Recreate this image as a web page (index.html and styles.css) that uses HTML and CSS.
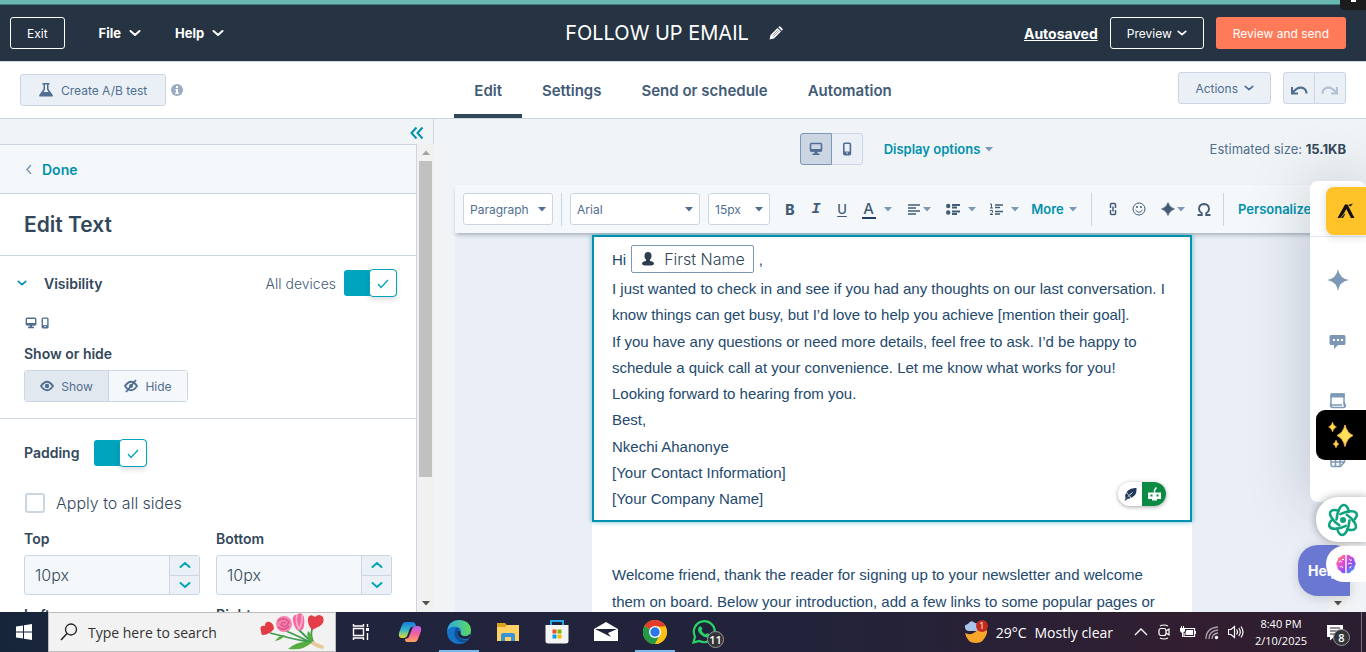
FILE: index.html
```html
<!DOCTYPE html>
<html lang="en">
<head>
<meta charset="utf-8">
<meta name="viewport" content="width=device-width, initial-scale=1">
<title>Follow up email</title>
<link rel="stylesheet" href="styles.css">
</head>
<body>
<svg class="defs" width="0" height="0" aria-hidden="true">
  <symbol id="chev" viewBox="0 0 12 12"><path d="M1.500 4l4.500 4 4.500-4" fill="none" stroke="currentColor" stroke-width="2" stroke-linecap="round" stroke-linejoin="round"/></symbol>
  <symbol id="caret" viewBox="0 0 8 5"><path d="M0 0h8L4 4.500z" fill="currentColor"/></symbol>
  <symbol id="desktop" viewBox="0 0 14 14"><path d="M2.500 1.500h9q1 0 1 1V8q0 1-1 1h-9q-1 0-1-1V2.500q0-1 1-1z" fill="none" stroke="currentColor" stroke-width="1.600"/><path d="M1 7h12v2.500H1zM5.500 9h3v2.500h2V13h-7v-1.500h2z" fill="currentColor"/></symbol>
  <symbol id="mobile" viewBox="0 0 14 14"><rect x="3.800" y="1.300" width="6.600" height="11.400" rx="1" fill="none" stroke="currentColor" stroke-width="1.600"/><path d="M4 9.500h6v3H4z" fill="currentColor"/><path d="M6.300 10.600h1.500v1H6.300z" fill="#fff"/></symbol>
  <symbol id="eye" viewBox="0 0 14 12"><path d="M1 6q6-8.500 12 0-6 8.500-12 0z" fill="none" stroke="currentColor" stroke-width="1.800"/><circle cx="7" cy="6" r="2.200" fill="currentColor"/></symbol>
  <symbol id="star4" viewBox="0 0 22 22"><path d="M11 0Q12.500 9.500 22 11 12.500 12.500 11 22 9.500 12.500 0 11 9.500 9.500 11 0z" fill="currentColor"/></symbol>
  <symbol id="star4b" viewBox="0 0 14 14"><path d="M7 0.500Q8.500 5.500 13.500 7 8.500 8.500 7 13.500 5.500 8.500 .5 7 5.500 5.500 7 .5z" fill="currentColor" stroke="currentColor" stroke-width=".6"/></symbol>
  <symbol id="tick" viewBox="0 0 14 12"><path d="M2 7l3 3.500 7-7.500" fill="none" stroke="currentColor" stroke-width="1.300"/></symbol>
</svg>

<div class="app">
  <header class="topbar">
    <div class="topbar-left">
      <button class="btn btn-ghost">Exit</button>
      <button class="menu">File <svg class="ic12"><use href="#chev"/></svg></button>
      <button class="menu">Help <svg class="ic12"><use href="#chev"/></svg></button>
    </div>
    <div class="title-wrap">
      <h1 class="title">FOLLOW UP EMAIL</h1>
      <button class="plain" aria-label="Rename"><svg class="ic14" viewBox="0 0 14 14"><path d="M.5 13.500l1-4.500L8.500 2l3.500 3.500L5 12.500zM9.300 1.200l.7-.7q.6-.5 1.200 0l2.300 2.300q.5.600 0 1.200l-.7.700z" fill="#fff"/><path d="M3.500 9.500l5.500-5.500M4.700 10.500l5.500-5.500" stroke="#253342" stroke-width=".5"/></svg></button>
    </div>
    <div class="topbar-right">
      <a class="autosaved" href="#">Autosaved</a>
      <button class="btn btn-ghost">Preview <svg class="ic10"><use href="#chev"/></svg></button>
      <button class="btn btn-primary">Review and send</button>
    </div>
    <div class="corner-tab"><span class="corner-dot"></span></div>
  </header>

  <nav class="subnav">
    <div class="subnav-left">
      <button class="btn btn-soft btn-test"><svg class="ic14" viewBox="0 0 14 14"><path d="M3.500 0h7v1.500h-1V6l4.200 6q.5 1.500-1 1.500H1.300q-1.500 0-1-1.500L4.500 6V1.500h-1z" fill="#506e91"/><path d="M6 1.500h2v5l1.500 2.500h-5L6 6.500z" fill="#eaf0f6"/></svg>Create A/B test</button>
      <svg class="ic12" viewBox="0 0 12 12"><circle cx="6" cy="6" r="6" fill="#99acc2"/><path d="M5 2h2v2H5zM4.500 5H7v3.500h.7V10H4.300V8.500H5V6.300h-.5z" fill="#fff"/></svg>
    </div>
    <div class="tabs">
      <a class="tab tab-active" href="#">Edit</a>
      <a class="tab" href="#">Settings</a>
      <a class="tab" href="#">Send or schedule</a>
      <a class="tab" href="#">Automation</a>
    </div>
    <div class="subnav-right">
      <button class="btn btn-soft btn-actions">Actions <svg class="ic10"><use href="#chev"/></svg></button>
      <div class="pair">
        <button class="pair-btn" aria-label="Undo"><svg class="ic18" viewBox="0 0 18 18"><path d="M2 8v6.500h6M2.500 14Q8 6.500 14 9.500q2.500 1.500 2.500 5" fill="none" stroke="#506e91" stroke-width="2"/></svg></button>
        <button class="pair-btn" aria-label="Redo"><svg class="ic18" viewBox="0 0 18 18"><path d="M16 8v6.500h-6M15.500 14Q10 6.500 4 9.500 1.500 11 1.500 14.500" fill="none" stroke="#b0c1d4" stroke-width="2"/></svg></button>
      </div>
    </div>
  </nav>

  <main class="main">
    <aside class="sidebar">
      <div class="collapse"><button class="plain teal" aria-label="Collapse"><svg class="ic14" viewBox="0 0 14 14"><path d="M6.500 1.500L1.500 7l5 5.500M12.500 1.500l-5 5.500 5 5.500" fill="none" stroke="currentColor" stroke-width="2"/></svg></button></div>
      <div class="side-body">
        <div class="panel">
          <div class="done-row"><svg class="ic10" viewBox="0 0 10 10"><path d="M7 1L3 5.500 7 10" fill="none" stroke="#7c98b6" stroke-width="1.500"/></svg><a class="done" href="#">Done</a></div>
          <h2 class="panel-title">Edit Text</h2>
          <section class="visibility">
            <div class="vis-row">
              <button class="expander"><svg class="ic10 teal"><use href="#chev"/></svg>Visibility</button>
              <label class="all" for="all-dev">All devices</label>
              <span class="toggle"><input class="toggle-input" id="all-dev" type="checkbox" checked><span class="knob"><svg class="ic14"><use href="#tick"/></svg></span></span>
            </div>
            <div class="devices"><svg class="ic12"><use href="#desktop"/></svg><svg class="ic12"><use href="#mobile"/></svg></div>
            <div class="label">Show or hide</div>
            <div class="seg">
              <button class="seg-btn seg-on"><svg class="ic14"><use href="#eye"/></svg>Show</button>
              <button class="seg-btn"><svg class="ic14" viewBox="0 0 14 12"><path d="M1 6q6-8.500 12 0-6 8.500-12 0zM12 0L2 12" fill="none" stroke="currentColor" stroke-width="1.800"/><circle cx="7" cy="6" r="2" fill="currentColor"/></svg>Hide</button>
            </div>
          </section>
          <section class="padding">
            <div class="pad-row"><label class="label" for="pad">Padding</label>
              <span class="toggle"><input class="toggle-input" id="pad" type="checkbox" checked><span class="knob"><svg class="ic14"><use href="#tick"/></svg></span></span></div>
            <label class="check"><input class="check-box" type="checkbox">Apply to all sides</label>
            <div class="sides">
              <div class="side"><label class="label" for="top">Top</label>
                <div class="stepper"><input class="num" id="top" value="10px"><div class="steps"><button class="step" aria-label="Increase"><svg class="ic12 up"><use href="#chev"/></svg></button><button class="step" aria-label="Decrease"><svg class="ic12"><use href="#chev"/></svg></button></div></div></div>
              <div class="side"><label class="label" for="bottom">Bottom</label>
                <div class="stepper"><input class="num" id="bottom" value="10px"><div class="steps"><button class="step" aria-label="Increase"><svg class="ic12 up"><use href="#chev"/></svg></button><button class="step" aria-label="Decrease"><svg class="ic12"><use href="#chev"/></svg></button></div></div></div>
              <div class="label">Left</div>
              <div class="label">Right</div>
            </div>
          </section>
        </div>
        <div class="scrollbar"><svg class="arrow up" viewBox="0 0 8 5"><path d="M0 0h8L4 4.500z" fill="#a3a3a3"/></svg><div class="thumb"></div><svg class="arrow" viewBox="0 0 8 5"><path d="M0 0h8L4 4.500z" fill="#505050"/></svg></div>
      </div>
    </aside>

    <section class="work">
      <div class="viewbar">
        <div class="view-mid">
          <div class="pair">
            <button class="pair-btn pair-on" aria-label="Desktop"><svg class="ic14"><use href="#desktop"/></svg></button>
            <button class="pair-btn" aria-label="Mobile"><svg class="ic14"><use href="#mobile"/></svg></button>
          </div>
          <button class="link-btn">Display options <svg class="caret"><use href="#caret"/></svg></button>
        </div>
        <div class="size">Estimated size: <b class="size-val">15.1KB</b></div>
      </div>

      <div class="toolbar">
        <span class="sel sel-para"><select class="select" aria-label="Style"><option>Paragraph</option></select><svg class="caret sel-caret"><use href="#caret"/></svg></span>
        <span class="vr"></span>
        <span class="sel sel-font"><select class="select" aria-label="Font"><option>Arial</option></select><svg class="caret sel-caret"><use href="#caret"/></svg></span>
        <span class="sel sel-size"><select class="select" aria-label="Size"><option>15px</option></select><svg class="caret sel-caret"><use href="#caret"/></svg></span>
        <div class="tools">
          <button class="tool tool-b">B</button>
          <button class="tool tool-i">I</button>
          <button class="tool tool-u">U</button>
          <button class="tool tool-wide" aria-label="Text color"><span class="color-a">A</span><svg class="caret"><use href="#caret"/></svg></button>
          <button class="tool tool-wide tight" aria-label="Align"><svg class="ic14" viewBox="0 0 14 14"><path d="M1 3h12M1 6h8M1 9h12M1 12h8" stroke="currentColor" stroke-width="1.600"/></svg><svg class="caret"><use href="#caret"/></svg></button>
          <button class="tool tool-wide" aria-label="Bullets"><svg class="ic14" viewBox="0 0 14 14"><circle cx="2.200" cy="4" r="2.200" fill="currentColor"/><circle cx="2.200" cy="10.500" r="2.200" fill="currentColor"/><path d="M6 3h8M6 5.500h5M6 9.500h8M6 12h5" stroke="currentColor" stroke-width="1.800"/></svg><svg class="caret"><use href="#caret"/></svg></button>
          <button class="tool tool-wide" aria-label="Numbering"><svg class="ic14" viewBox="0 0 14 14"><path d="M1 2h1.500v4M1 6h3M1 8.500h2.500v2L1 12.500h3" fill="none" stroke="currentColor"/><path d="M6 3h8M6 5.500h5M6 9.500h8M6 12h5" stroke="currentColor" stroke-width="1.600"/></svg><svg class="caret"><use href="#caret"/></svg></button>
          <button class="link-btn more">More <svg class="caret"><use href="#caret"/></svg></button>
        </div>
        <span class="vr"></span>
        <div class="tools">
          <button class="tool" aria-label="Link"><svg class="ic14" viewBox="0 0 14 14"><path d="M4.500 6V2.500q0-1 1-1h3q1 0 1 1V6M4.500 8v3.500q0 1 1 1h3q1 0 1-1V8M7 4.500v5" fill="none" stroke="currentColor" stroke-width="1.500"/></svg></button>
          <button class="tool" aria-label="Emoji"><svg class="ic14" viewBox="0 0 14 14"><circle cx="7" cy="7" r="6" fill="none" stroke="currentColor"/><path d="M3.500 8q3.500 4.500 7 0" fill="none" stroke="currentColor"/><circle cx="5" cy="5" r="1" fill="currentColor"/><circle cx="9" cy="5" r="1" fill="currentColor"/></svg></button>
          <button class="tool tool-wide tight" aria-label="Assistant"><svg class="ic14"><use href="#star4b"/></svg><svg class="caret"><use href="#caret"/></svg></button>
          <button class="tool tool-omega" aria-label="Special character"><svg class="ic14" viewBox="0 0 14 14"><path d="M.5 13h4.300V11.200Q2 9.500 2 6.800 2.300 2.300 7 2q4.700.3 5 4.800 0 2.700-2.800 4.400V13h4.300" fill="none" stroke="currentColor" stroke-width="1.800"/></svg></button>
        </div>
        <span class="vr"></span>
        <button class="link-btn personalize">Personalize</button>
      </div>

      <div class="canvas-row">
        <div class="canvas">
          <article class="email">
            <div class="block block-active">
              <p class="hi">Hi <span class="token"><svg class="person" viewBox="0 0 12 14"><ellipse cx="6" cy="4" rx="3.500" ry="4" fill="#2d3e50"/><path d="M4 7h4v2q4 .3 4 3-.5 1.500-6 1.500T0 12q0-2.700 4-3z" fill="#2d3e50"/></svg>First Name</span> ,</p>
              <p class="para">I just wanted to check in and see if you had any thoughts on our last conversation. I know things can get busy, but I’d love to help you achieve [mention their goal].</p>
              <p class="para">If you have any questions or need more details, feel free to ask. I’d be happy to schedule a quick call at your convenience. Let me know what works for you!</p>
              <p class="para">Looking forward to hearing from you.</p>
              <p class="para">Best,</p>
              <p class="para">Nkechi Ahanonye</p>
              <p class="para">[Your Contact Information]</p>
              <p class="para">[Your Company Name]</p>
              <div class="writer">
                <svg class="writer-half" viewBox="0 0 24 24"><path d="M8 17.500Q5.500 13 10 8.500q3-3 8.500-2.500Q19 11 16 14q-3 3-8 3.500z" fill="#24385b"/><path d="M6.500 19q3-5 8-8.500M8 10.500l2.500 2M13 16l-1.500-2" stroke="#fff" stroke-width=".9" fill="none"/><path d="M7 18.500l3-4" stroke="#24385b" stroke-width="1.200"/></svg>
                <svg class="writer-half writer-bot" viewBox="0 0 24 24"><path d="M6 10.500h13V17h-4v1.500h-5V17H6z" fill="#fff"/><path d="M12.500 10.500V8l2-2.500" stroke="#fff" stroke-width="1.500" fill="none"/><path d="M8.500 12.500h2v2h-2zM14.500 12.500h2v2h-2z" fill="#0a8a43"/></svg>
              </div>
            </div>
            <div class="block">
              <p class="para">Welcome friend, thank the reader for signing up to your newsletter and welcome them on board. Below your introduction, add a few links to some popular pages or</p>
            </div>
          </article>
        </div>
        <div class="scrollbar canvas-bar"><svg class="arrow" viewBox="0 0 8 5"><path d="M0 0h8L4 4.500z" fill="#505050"/></svg></div>
      </div>
    </section>

    <div class="rail">
      <div class="rail-head"><div class="rail-logo"><svg class="ic18" viewBox="0 0 18 18"><path d="M.5 16L8 2.500h2.500L17.500 16H14L9.300 7 6.500 12.500l2-1L6 16z" fill="#111"/><path d="M11 3l2.500 1.500L16 1.500z" fill="#111"/><path d="M3.500 16l6-7" stroke="#ffc229" stroke-width=".8" fill="none"/></svg></div></div>
      <svg class="rail-ic rail-star"><use href="#star4"/></svg>
      <svg class="rail-ic" viewBox="0 0 18 18"><path d="M2 2h13q1.500 0 1.500 1.500v7Q16.500 12 15 12H9l-4 4v-4H2Q.5 12 .5 10.500v-7Q.5 2 2 2z" fill="#7c98b6"/><path d="M4 6h2v2H4zM8 6h2v2H8zM12 6h2v2h-2z" fill="#fff"/></svg>
      <svg class="rail-ic" viewBox="0 0 18 18"><path d="M2 1h13v8l1.500 4q-.5 1.500-2 1.500H4Q1.500 14.500 1.500 12H13M2 1.500v8L1.500 12M15 7v4q0 1.500 1 2" fill="none" stroke="#7c98b6" stroke-width="1.500"/><path d="M1.500 .5h14v4h-14z" fill="#7c98b6"/></svg>
      <svg class="rail-ic" viewBox="0 0 18 18"><path d="M2 1h13.500v8l-4 4.500H4q-2 0-2-2z" fill="none" stroke="#7c98b6" stroke-width="1.500"/><path d="M2 5.500h13M2 9h13M6.500 2v11M11 2v11" stroke="#7c98b6" stroke-width="1.500"/></svg>
    </div>
    <div class="spark-tab"><svg class="spark" viewBox="0 0 28 28"><path d="M18 4q2 8 8 10.500Q20 17 18 25.500 16 17 10 14.500 16 12 18 4z" fill="#ffe05c" stroke="#f7ad3c"/><path d="M5.500 1q1 4 4 5-3 1-4 5-1-4-4-5 3-1 4-5zM9 19q1 3.500 3 4-2 .5-3 4-1-3.500-3-4 2-.5 3-4z" fill="#ffd84a" stroke="#f7ad3c" stroke-width=".5"/></svg></div>
    <button class="help">Help</button>
    <div class="atom-tab"><svg class="atom" viewBox="0 0 34 34" fill="none" stroke="#0fa47f" stroke-width="2.600" stroke-linecap="round"><g transform="rotate(4 17 17)"><ellipse cx="17" cy="17" rx="6.500" ry="15" stroke-dasharray="26 9"/><ellipse cx="17" cy="17" rx="6.500" ry="15" transform="rotate(60 17 17)" stroke-dasharray="26 9"/><ellipse cx="17" cy="17" rx="6.500" ry="15" transform="rotate(120 17 17)" stroke-dasharray="26 9"/></g><circle cx="17" cy="17" r="3" fill="#0fa47f" stroke="none"/></svg></div>
    <div class="brain-tab"><svg class="brain" viewBox="0 0 20 20"><defs><linearGradient id="br" x1="0" y1="0" x2="1" y2="1"><stop offset="0" stop-color="#ff9d4a"/><stop offset=".35" stop-color="#e94fd0"/><stop offset=".65" stop-color="#8a4df5"/><stop offset="1" stop-color="#33c2ff"/></linearGradient></defs><path d="M9.300 1v18Q6 20 4.500 17 1 16 1.500 12.500-1 10 1.500 7 1.500 3 5 2.500 7 0 9.300 1zM10.700 1v18q3.300 1 4.800-2 3.500-1 3-4.500 2.500-2.500 0-5.500 0-4-3.500-4.500-2-2.500-4.300-1.500z" fill="url(#br)"/><path d="M3 8q2-2 3 0M4 13q2-2 3 1M6 5.500h2M13 5q1 2 3 1M12 10q2-2 4 0M13 14q2 0 2-2" stroke="#fff" fill="none"/></svg></div>
  </main>
</div>

<footer class="taskbar">
  <button class="start" aria-label="Start"><svg class="ic16" viewBox="0 0 16 16"><path d="M0 2.500l7-1v6H0zM8 1.300L16 0v7.500H8zM0 8.500h7v6l-7-1zM8 8.500h8V16l-8-1.300z" fill="#fff"/></svg></button>
  <label class="search">
    <svg class="ic18" viewBox="0 0 18 18"><circle cx="11" cy="6.500" r="5.500" fill="none" stroke="#222" stroke-width="1.300"/><path d="M7 10.500L1 17" stroke="#222" stroke-width="1.500"/></svg>
    <input class="search-input" type="text" placeholder="Type here to search">
    <svg class="flowers" viewBox="0 0 66 38"><path d="M10 20q22 6 44 10M24 17q14 6 30 14M38 16q8 8 16 15M52 16q-2 8 2 14" fill="none" stroke="#3c9b4c" stroke-width="1.800"/><path d="M28 36q10-9 24-7-8 9-24 7zM15 28q4-6 10-6-3 5-10 6zM50 28q-4-5-2-10 5 4 4 10z" fill="#55ad3f"/><path d="M52 28l12 5-1 3-5-1-7-4z" fill="#e9c899"/><path d="M1 18q-2-6 4-5 0-5 5-4 4 2 4 7-5 6-12 6-1-2-1-4z" fill="#e33b46"/><circle cx="24" cy="11" r="8" fill="#f582ac"/><path d="M18 8q6-5 11 1-3 7-8 3 1-4 5-2M18 14q6 5 11-1" fill="none" stroke="#d94e86" stroke-width="1.300"/><path d="M33 4q2-3 4-2 2-3 5-1l2 3q1 8-1 12-3 3-7 0-4-6-3-12z" fill="#f66aa0"/><path d="M37 2q-2 7 2 14 4-6 3-14" fill="none" stroke="#fbb2cd" stroke-width="1.500"/><path d="M48 5q2-5 7-1 4-4 8 0 2 6-3 9l-8 4q-5-6-4-12z" fill="#e53d48"/></svg>
  </label>
  <div class="apps">
    <button class="appbtn" aria-label="Task view"><svg class="ic18" viewBox="0 0 18 18" fill="none" stroke="#fff" stroke-width="1.400"><path d="M1.500 5.500h10v7h-10zM1.500 1v2h10V1M1.500 17v-2h10v2M15.500 1v3M15.500 10v7"/><path d="M14 5h3v3h-3z" fill="#fff" stroke="none"/></svg></button>
    <button class="appbtn" aria-label="Copilot"><svg class="ic24" viewBox="0 0 24 24"><defs><linearGradient id="c1" x1="0" y1="0" x2="0" y2="1"><stop offset="0" stop-color="#1779df"/><stop offset=".5" stop-color="#37b8c7"/><stop offset="1" stop-color="#e4d92f"/></linearGradient><linearGradient id="c2" x1="0" y1="0" x2="0" y2="1"><stop offset="0" stop-color="#b65cf2"/><stop offset=".5" stop-color="#f4629b"/><stop offset="1" stop-color="#ffa45c"/></linearGradient></defs><path d="M7 2h8q2 0 3 4l-4 1q-2 0-3 4l-1.500 4q-1 3-4 3H3q-3-1-2-5L4 5q1-3 3-3z" fill="url(#c1)"/><path d="M17 22H9q-2 0-2-3l3-1q1-1 2-4l2-5q1-3 4-3h3q3 1 2 5l-3 8q-1 3-3 3z" fill="url(#c2)"/></svg></button>
    <button class="appbtn appbtn-open" aria-label="Edge"><svg class="ic24" viewBox="0 0 24 24"><defs><linearGradient id="e1"><stop offset="0" stop-color="#2aa9e8"/><stop offset="1" stop-color="#5fd95b"/></linearGradient></defs><circle cx="12" cy="12" r="12" fill="#1573c9"/><path d="M0 11Q2 0 12 0q11 0 12 10 0 6-6 6-5 0-4-3 1-5-4-6Q3 6 0 11z" fill="url(#e1)"/><path d="M9 8q-4 8 2 13 5 3 10-1-4 1-8-2-3-3-2-6 1-3 1-4z" fill="#0d4f96"/><path d="M11 11q-1 5 3 7 5 2 8 0 2-3 1-4-3 3-7 2-3-1-3-5z" fill="#20243b"/></svg></button>
    <button class="appbtn" aria-label="File Explorer"><svg class="ic24" viewBox="0 0 24 24"><path d="M1 3h8l2 2h12v16H1z" fill="#e0a21d"/><path d="M1 7h8l2-2h12v16H1z" fill="#ffd263"/><path d="M5 21v-6q0-2 2-2h10q2 0 2 2v6h-4v-4H9v4z" fill="#3a93d8"/></svg></button>
    <button class="appbtn" aria-label="Store"><svg class="ic24" viewBox="0 0 24 24"><path d="M6 5V1h12v4" fill="none" stroke="#25a7f0" stroke-width="2"/><path d="M.5 5h23v16q0 2.500-3 2.500H3.500q-3 0-3-2.500z" fill="#f4f4f4"/><path d="M7.500 9.500h4v4h-4z" fill="#f25022"/><path d="M12.500 9.500h4v4h-4z" fill="#7fba00"/><path d="M7.500 14.500h4v4h-4z" fill="#00a4ef"/><path d="M12.500 14.500h4v4h-4z" fill="#ffb900"/></svg></button>
    <button class="appbtn" aria-label="Mail"><svg class="ic24" viewBox="0 0 24 24"><path d="M0 9l12-7 12 7v12H0z" fill="#fff"/><path d="M1 9h22l-9 4 3 4z" fill="#20243b"/></svg></button>
    <button class="appbtn appbtn-open" aria-label="Chrome"><svg class="ic24" viewBox="0 0 24 24"><circle cx="12" cy="12" r="12" fill="#fbc116"/><path d="M12 12L1.600 6A12 12 0 0 1 22.400 6z" fill="#e33b2e"/><path d="M12 12L1.600 6A12 12 0 0 0 12 24l5-9z" fill="#249a48"/><path d="M12 6.500h10.600A12 12 0 0 1 12 24l5-9z" fill="#fbc116"/><circle cx="12" cy="12" r="6" fill="#fff"/><circle cx="12" cy="12" r="4.700" fill="#2d75e8"/></svg></button>
    <button class="appbtn" aria-label="WhatsApp"><svg class="ic24" viewBox="0 0 24 24"><path d="M1.500 22.500l1.500-6A10.500 10.500 0 1 1 7.500 21z" fill="none" stroke="#25d366" stroke-width="2.200"/><path d="M7 7q2-2 3 1 1 1-.5 2.500 1.500 3 4 4 1.500-2 2.500-1 3 1 1.500 3-2 2-6 0-5-3-5.500-6.500 0-2 1-3z" fill="#25d366"/></svg><span class="badge">11</span></button>
  </div>
  <div class="tray">
    <button class="weather"><span class="moon"><svg class="ic24" viewBox="0 0 24 24"><path d="M1 13q8 4 15-6 8 0 7 6-3 10-11 10Q3 23 1 13z" fill="#f7a62b"/><path d="M2 10q-3-5 2-6 3-5 7-1 4 0 3 4 1 4-3 4H4z" fill="#a9c4ec"/></svg><span class="alert">1</span></span><span>29°C</span><span>Mostly clear</span></button>
    <div class="tray-icons">
      <svg class="ic14" viewBox="0 0 14 14"><path d="M1 10l6-6 6 6" fill="none" stroke="#fff" stroke-width="1.300"/></svg>
      <svg class="ic16" viewBox="0 0 16 16" fill="none" stroke="#fff" stroke-width="1.200"><rect x="3" y="4.500" width="7" height="7" rx="2"/><path d="M10 7l3-2v6l-3-2M4 2q4-2 8 0M4 14q4 2 8 0"/></svg>
      <svg class="ic16" viewBox="0 0 16 16"><path d="M5 4.500h9.500v8H4V9" fill="none" stroke="#fff" stroke-width="1.200"/><path d="M6.500 6H13v5H5.500V8.500zM15 7h1v3h-1zM0 4h5v3q-1 2-2.500 2T0 7zM1 2h1v2H1zM3 2h1v2H3zM2 9h1v4H2z" fill="#fff"/></svg>
      <svg class="ic16" viewBox="0 0 16 16"><g fill="none" stroke="#aaa3ad" stroke-width="1.300"><path d="M2 15Q2 4 14 3"/><path d="M5 15q0-8 9-9"/><path d="M8 15q0-5 6-6"/></g><circle cx="12.500" cy="13.500" r="1.700" fill="#fff"/></svg>
      <svg class="ic16" viewBox="0 0 16 16" fill="none" stroke="#fff" stroke-width="1.200"><path d="M.5 5.500H3l3.500-3v11l-3.500-3H.5zM8.500 5.500q2 2.500 0 5M10.800 4q3 4 0 8M13 2.500q4 5.500 0 11"/></svg>
    </div>
    <div class="clock"><span>8:40 PM</span><span>2/10/2025</span></div>
    <button class="notif" aria-label="Notifications"><svg class="ic18" viewBox="0 0 18 18"><path d="M1 2h16v12H8l-4 3.500V14H1z" fill="#fff"/><path d="M4 5h10M4 8h10M4 11h10" stroke="#2b1e31" stroke-width="1.200"/></svg><span class="badge">8</span></button>
  </div>
</footer>
</body>
</html>
```
FILE: styles.css
```css
* { box-sizing: border-box; }
body {
  margin: 0;
  height: 100vh;
  display: flex;
  flex-direction: column;
  overflow: hidden;
  font-family: Inter, "Liberation Sans", sans-serif;
  font-size: 14px;
  color: #33475b;
}
button, input, select { font: inherit; color: inherit; }
button { cursor: pointer; padding: 0; border: 0; background: none; }
h1, h2, p { margin: 0; }
a { text-decoration: none; }
svg { display: block; flex: none; }
.defs { position: absolute; }
.ic10 { width: 10px; height: 10px; }
.ic12 { width: 12px; height: 12px; }
.ic14 { width: 14px; height: 14px; }
.ic16 { width: 16px; height: 16px; }
.ic18 { width: 18px; height: 18px; }
.ic24 { width: 24px; height: 24px; }
.up { transform: rotate(180deg); }
.teal { color: #0091ae; }
.caret { width: 8px; height: 5px; color: #7c98b6; }

.app { flex: 1; min-height: 0; display: flex; flex-direction: column; }

.topbar {
  position: relative;
  display: grid;
  grid-template-columns: 1fr auto 1fr;
  align-items: center;
  height: 62px;
  flex: none;
  padding: 1px 20px 0 10px;
  border-top: 4px solid #6ab8b0;
  border-bottom: 1px solid #cbd6e2;
  background: #253342;
  box-shadow: inset 0 1px #3f7f7e;
  color: #fff;
}
.topbar-left, .topbar-right { display: flex; align-items: center; }
.topbar-right { justify-content: flex-end; gap: 12px; }
.btn {
  display: flex;
  align-items: center;
  justify-content: center;
  height: 32px;
  padding: 0 16px;
  border: 1px solid transparent;
  border-radius: 3px;
  font-size: 12px;
  white-space: nowrap;
}
.btn-ghost { border-color: #fff; gap: 5px; }
.btn-primary { background: #ff7a59; }
.btn-soft { gap: 8px; background: #eaf0f6; border-color: #cbd6e2; color: #506e91; }
.btn-test { padding: 0 18px; }
.btn-actions { gap: 6px; }
.menu { display: flex; align-items: center; gap: 8px; margin-left: 34px; font-size: 13px; font-weight: 700; }
.title-wrap { display: flex; align-items: center; gap: 20px; padding-right: 8px; }
.title { font-size: 20px; font-weight: 400; line-height: 24px; }
.autosaved { font-weight: 700; color: #fff; text-decoration: underline; }
.corner-tab {
  position: absolute;
  right: 0;
  top: -4px;
  width: 26px;
  height: 10px;
  border-radius: 0 0 0 4px;
  background: #1c1c1c;
}
.corner-dot { display: block; width: 5px; height: 2px; margin: 0 auto; background: #fff; }

.subnav {
  display: grid;
  grid-template-columns: 1fr auto 1fr;
  align-items: center;
  height: 57px;
  flex: none;
  padding: 0 20px;
  border-bottom: 1px solid #cbd6e2;
  background: #fff;
}
.subnav-left { display: flex; align-items: center; gap: 5px; }
.subnav-right { display: flex; justify-content: flex-end; gap: 12px; padding-bottom: 4px; }
.tabs { display: flex; height: 56px; }
.tab {
  display: flex;
  align-items: center;
  padding: 4px 20px 0;
  border-bottom: 4px solid transparent;
  color: #425b76;
  font-size: 15px;
  font-weight: 600;
}
.tab-active { border-color: #33475b; }
.pair { display: flex; }
.pair-btn {
  display: grid;
  place-items: center;
  width: 31px;
  height: 32px;
  border: 1px solid #cbd6e2;
  border-left-width: 0;
  border-radius: 0 3px 3px 0;
  background: #eaf0f6;
  color: #506e91;
}
.pair-btn:first-child { width: 32px; border-left-width: 1px; border-radius: 3px 0 0 3px; }
.pair-btn.pair-on { border-color: #7c98b6; background: #cbd6e2; }

.main { position: relative; flex: 1; min-height: 0; display: flex; background: #f0f4f7; }
.sidebar { width: 434px; flex: none; display: flex; flex-direction: column; }
.collapse {
  display: flex;
  justify-content: flex-end;
  align-items: center;
  height: 25px;
  flex: none;
  padding: 3px 9px 0 0;
  border-right: 1px solid #cbd6e2;
}
.side-body { flex: 1; min-height: 0; display: flex; }
.panel {
  flex: 1;
  overflow: hidden;
  background: #fff;
  border-top: 1px solid #cbd6e2;
  border-right: 1px solid #cbd6e2;
}
.scrollbar {
  display: flex;
  flex-direction: column;
  align-items: center;
  width: 17px;
  padding: 6px 0;
  background: #f1f1f1;
}
.arrow { width: 8px; height: 5px; }
.thumb { width: 13px; height: 316px; margin: 6px 0 auto; background: #c1c1c1; }
.done-row {
  display: flex;
  align-items: center;
  gap: 8px;
  height: 49px;
  padding-left: 24px;
  border-bottom: 1px solid #cbd6e2;
  background: #f5f8fa;
}
.done { color: #0091ae; font-weight: 600; }
.panel-title {
  height: 62px;
  padding: 3px 0 0 24px;
  border-bottom: 1px solid #cbd6e2;
  font-size: 21px;
  font-weight: 600;
  line-height: 56px;
}
.visibility { height: 163px; padding: 12px 19px 0 24px; border-bottom: 1px solid #cbd6e2; }
.vis-row { display: flex; align-items: center; height: 30px; margin-left: -7px; }
.expander { display: flex; align-items: center; gap: 17px; margin-right: auto; font-weight: 600; }
.all { margin-right: 8px; color: #425b76; font-weight: 300; }
.toggle { position: relative; width: 53px; height: 28px; padding: 1px 0; }
.toggle-input { appearance: none; display: block; width: 53px; height: 26px; margin: 0; border-radius: 3px; background: #00a4bd; }
.knob {
  position: absolute;
  right: 0;
  top: 0;
  display: grid;
  place-items: center;
  width: 28px;
  height: 28px;
  border: 1px solid #00a4bd;
  border-radius: 4px;
  background: #fff;
  color: #00a4bd;
  box-shadow: 0 3px 5px rgba(0, 0, 0, .12);
  pointer-events: none;
}
.devices { display: flex; gap: 2px; margin: 19px 0 15px 1px; color: #506e91; }
.label { display: block; font-weight: 600; line-height: 20px; }
.seg { display: flex; width: 164px; margin-top: 6px; border: 1px solid #cbd6e2; border-radius: 3px; }
.seg-btn {
  flex: 1;
  display: flex;
  align-items: center;
  justify-content: center;
  gap: 7px;
  height: 30px;
  background: #f5f8fa;
  color: #506e91;
  font-size: 12px;
}
.seg-on { flex: none; width: 84px; background: #e2e8f0; border-right: 1px solid #cbd6e2; }
.padding { padding: 20px 24px 0; }
.pad-row { display: flex; align-items: center; gap: 15px; height: 28px; }
.check { display: flex; align-items: center; gap: 11px; margin: 24px 0 14px; font-size: 16px; font-weight: 300; line-height: 24px; }
.check-box { appearance: none; width: 20px; height: 20px; margin: 0 0 0 1px; border: 2px solid #cbd6e2; border-radius: 3px; }
.sides { display: grid; grid-template-columns: 176px 176px; gap: 10px 16px; }
.stepper { display: flex; height: 40px; margin-top: 6px; border: 1px solid #cbd6e2; border-radius: 3px; background: #f5f8fa; }
.num { flex: 1; min-width: 0; padding: 0 10px; border: 0; background: none; font-size: 16px; font-weight: 300; }
.steps { display: flex; flex-direction: column; width: 30px; border-left: 1px solid #cbd6e2; background: #eaf0f6; color: #00a4bd; }
.step { flex: 1; display: grid; place-items: center; }
.step + .step { border-top: 1px solid #cbd6e2; }

.work { flex: 1; min-width: 0; display: flex; flex-direction: column; padding-left: 21px; }
.viewbar { position: relative; display: flex; align-items: center; justify-content: center; height: 66px; flex: none; padding-bottom: 6px; }
.view-mid { display: flex; align-items: center; gap: 21px; margin-right: 28px; }
.link-btn { display: flex; align-items: center; gap: 5px; font-size: 13px; font-weight: 600; color: #0091ae; }
.size { position: absolute; right: 20px; color: #516f90; font-size: 13px; }
.size-val { color: #33475b; font-weight: 700; }
.toolbar {
  position: relative;
  display: flex;
  align-items: center;
  height: 48px;
  flex: none;
  padding-left: 8px;
  background: #f5f8fa;
  box-shadow: 0 3px 4px -1px rgba(45, 62, 80, .35);
}
.sel { position: relative; flex: none; height: 32px; }
.select {
  appearance: none;
  width: 100%;
  height: 32px;
  padding: 0 6px;
  border: 1px solid #cbd6e2;
  border-radius: 3px;
  background: #fff;
  color: #506e91;
  font-size: 12px;
}
.sel-caret { position: absolute; right: 7px; top: 14px; color: #506e91; pointer-events: none; }
.sel-para { width: 90px; }
.sel-font { width: 130px; margin-right: 8px; }
.sel-size { width: 62px; margin-right: 7px; }
.vr { flex: none; width: 1px; height: 33px; margin: 0 8px; background: #cbd6e2; }
.tools { display: flex; align-items: center; flex: none; }
.tool { display: flex; align-items: center; justify-content: center; width: 26px; height: 30px; color: #425b76; }
.tool-wide { width: 43px; gap: 8px; }
.tool-wide.tight { width: 41px; gap: 2px; }
.tool-omega { width: 22px; }
.tool-b { font-weight: 800; }
.tool-i { font-family: "Liberation Mono", monospace; font-style: italic; font-weight: 700; font-size: 15px; }
.tool-u { font-size: 13px; font-weight: 500; text-decoration: underline; text-underline-offset: 2px; }
.color-a { width: 14px; border-bottom: 2px solid #253f63; font-size: 15px; line-height: 17px; font-weight: 500; text-align: center; }
.more { width: 58px; justify-content: center; }
.personalize { margin-left: 6px; }
.canvas-row { flex: 1; min-height: 0; display: flex; padding-right: 20px; }
.canvas-bar { justify-content: flex-end; flex: none; }
.canvas { flex: 1; padding-top: 2px; overflow: hidden; background: #eaeef6; }
.email { width: 600px; margin: 0 auto; background: #fff; }
.block {
  position: relative;
  padding: 7px 18px 8px;
  border: 2px solid transparent;
  font-family: Arial, "Liberation Sans", sans-serif;
  font-size: 15px;
  color: #23496d;
}
.block + .block { padding-top: 38px; }
.block-active { border-color: #0091ae; box-shadow: 0 0 5px rgba(0, 145, 174, .6); }
.hi { display: flex; align-items: center; gap: 5px; height: 30px; margin-bottom: 2px; }
.token {
  display: flex;
  align-items: center;
  gap: 10px;
  height: 28px;
  padding: 0 8px 0 10px;
  border: 1px solid #7c98b6;
  border-radius: 2px;
  font-family: Inter, "Liberation Sans", sans-serif;
  font-size: 16px;
  font-weight: 300;
  color: #33475b;
}
.person { width: 12px; height: 14px; }
.para { line-height: 1.75; }
.writer {
  position: absolute;
  right: 24px;
  bottom: 14px;
  display: flex;
  border-radius: 12px;
  overflow: hidden;
  background: #fff;
  box-shadow: 0 1px 4px rgba(0, 0, 0, .35);
}
.writer-half { width: 24px; height: 24px; }
.writer-bot { background: #0a8a43; }

.rail {
  position: absolute;
  right: 0;
  top: 62px;
  display: flex;
  flex-direction: column;
  align-items: center;
  gap: 42px;
  width: 56px;
  height: 321px;
  border-radius: 8px;
  background: #fff;
  box-shadow: 0 0 60px rgba(45, 62, 80, .25);
}
.rail-head {
  display: flex;
  justify-content: flex-end;
  align-self: stretch;
  height: 56px;
  margin-bottom: -10px;
  padding-top: 6px;
  border-bottom: 1px solid #e3e9f2;
}
.rail-logo {
  display: grid;
  place-items: center;
  width: 40px;
  height: 48px;
  border-radius: 8px 0 0 8px;
  background: #ffc229;
  box-shadow: 0 2px 8px rgba(0, 0, 0, .15);
}
.rail-ic { width: 18px; height: 18px; }
.rail-star { width: 22px; height: 22px; color: #7c98b6; }
.spark-tab, .help, .atom-tab, .brain-tab { position: absolute; display: flex; align-items: center; }
.spark-tab { right: 0; bottom: 152px; width: 50px; height: 50px; padding-left: 11px; border-radius: 9px 0 0 9px; background: #000; }
.spark { width: 28px; height: 28px; }
.atom-tab { right: 0; bottom: 70px; width: 50px; height: 45px; padding-left: 10px; border-radius: 22px 0 0 22px; background: #fff; box-shadow: 0 0 8px rgba(0, 0, 0, .35); }
.atom { width: 34px; height: 34px; }
.help { right: 16px; bottom: 16px; width: 52px; height: 51px; padding-left: 10px; border-radius: 20px 16px 1px 20px; background: #6a78d1; color: #fff; font-weight: 700; box-shadow: 0 2px 12px rgba(0, 0, 0, .15); }
.brain-tab { right: 0; bottom: 30px; width: 40px; height: 36px; padding-left: 10px; border-radius: 18px 0 0 18px; background: #fff; }
.brain { width: 20px; height: 20px; }

.taskbar {
  display: flex;
  height: 40px;
  flex: none;
  background: linear-gradient(90deg, #17253a 0, #20243c 25%, #22233a 60%, #321e30 88%, #2b1e31 100%);
  color: #fff;
  font-family: "Open Sans", "Noto Sans", sans-serif;
}
.start { display: grid; place-items: center; width: 48px; }
.search { display: flex; align-items: center; width: 288px; padding: 0 9px 0 11px; border: 1px solid #bdbdbd; background: #f2f2f2; }
.search-input { flex: 1; min-width: 0; padding: 0 10px; border: 0; background: none; color: #333; font-size: 14px; }
.search-input::placeholder { color: #333; opacity: 1; }
.flowers { width: 66px; height: 38px; }
.apps { display: flex; }
.appbtn { position: relative; display: grid; place-items: center; width: 49px; border-bottom: 2px solid transparent; border-top: 2px solid transparent; }
.appbtn-open { background: linear-gradient(#76b9ed, #76b9ed) center bottom / 40px 2px no-repeat border-box; }
.badge {
  position: absolute;
  left: 28px;
  top: 17px;
  width: 17px;
  height: 17px;
  border: 1px solid #999;
  border-radius: 50%;
  background: #333539;
  color: #fff;
  font-size: 11px;
  line-height: 15px;
  font-weight: 600;
  text-align: center;
}
.tray { display: flex; align-items: center; margin-left: auto; padding-right: 4px; }
.weather { display: flex; align-items: center; gap: 8px; margin-right: 21px; white-space: nowrap; }
.moon { position: relative; }
.alert {
  position: absolute;
  right: 0;
  top: 0;
  width: 12px;
  height: 12px;
  border-radius: 50%;
  background: #c42b1c;
  font-size: 9px;
  line-height: 12px;
  text-align: center;
}
.tray-icons { display: flex; align-items: center; gap: 8px; margin-right: 9px; }
.clock { display: flex; flex-direction: column; align-items: center; width: 56px; font-size: 11px; line-height: 17px; }
.notif { position: relative; display: grid; place-items: center; width: 53px; height: 40px; border-right: 1px solid #77707b; }
.notif .badge { left: 24px; }
```
